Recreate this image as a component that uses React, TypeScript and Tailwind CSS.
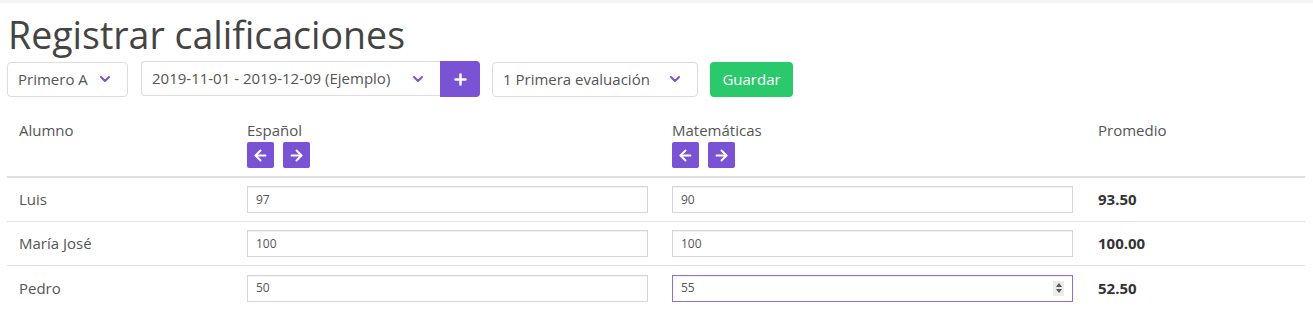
import { ArrowLeft, ArrowRight, ChevronDown, Plus } from "lucide-react"

type Row = {
    name: string
    espanol: string
    matematicas: string
    promedio: string
    focused?: boolean
}

const rows: Row[] = [
    { name: "Luis", espanol: "97", matematicas: "90", promedio: "93.50" },
    { name: "María José", espanol: "100", matematicas: "100", promedio: "100.00" },
    { name: "Pedro", espanol: "50", matematicas: "55", promedio: "52.50", focused: true },
]

function SelectBox({ label, width, roundedRight = true }: { label: string; width: string; roundedRight?: boolean }) {
    return (
        <div
            className={`flex h-[35px] items-center justify-between border border-[#dcdcdc] bg-white pl-[10px] pr-[14px] text-[15px] text-[#555] ${width} ${
                roundedRight ? "rounded-[4px]" : "rounded-l-[4px] border-r-0"
            }`}
        >
            <span>{label}</span>
            <ChevronDown className="h-[16px] w-[16px] text-[#7a52d4]" strokeWidth={3} />
        </div>
    )
}

function ArrowButtons() {
    return (
        <div className="mt-[1px] flex gap-[9px]">
            <button className="flex h-[26px] w-[27px] items-center justify-center rounded-[2px] bg-[#7a52d4] text-white">
                <ArrowLeft className="h-[17px] w-[17px]" strokeWidth={2.75} />
            </button>
            <button className="flex h-[26px] w-[27px] items-center justify-center rounded-[2px] bg-[#7a52d4] text-white">
                <ArrowRight className="h-[17px] w-[17px]" strokeWidth={2.75} />
            </button>
        </div>
    )
}

function GradeInput({ value, focused }: { value: string; focused?: boolean }) {
    return (
        <div
            className={`relative flex h-[27px] w-[401px] items-center border bg-white pl-[8px] text-[12px] text-[#555] shadow-[inset_0_1px_1px_rgba(0,0,0,0.06)] ${
                focused ? "border-[#8c6fd8]" : "border-[#d6d6d6]"
            }`}
        >
            <span>{value}</span>
            {focused && (
                <div className="absolute right-[8px] top-[5px] flex h-[15px] w-[11px] flex-col items-center justify-center gap-[2px] bg-[#ececec]">
                    <div className="h-0 w-0 border-x-[3px] border-b-[4px] border-x-transparent border-b-[#555]" />
                    <div className="h-0 w-0 border-x-[3px] border-t-[4px] border-x-transparent border-t-[#555]" />
                </div>
            )}
        </div>
    )
}

export default function App() {
    return (
        <div className="min-h-[316px] bg-white font-['Open_Sans',sans-serif] text-[#555]">
            <div className="h-[3px] bg-[#f4f4f4]" />
            <div className="px-[7px]">
                {/* Title */}
                <h1 className="mt-[7px] mb-[1px] h-[50px] pl-[1px] text-[37.5px] leading-[50px] text-[#444]">
                    Registrar calificaciones
                </h1>

                {/* Controls */}
                <div className="flex items-center">
                    <SelectBox label="Primero A" width="w-[121px]" />
                    <div className="ml-[13px] flex">
                        <SelectBox label="2019-11-01 - 2019-12-09 (Ejemplo)" width="w-[299px]" roundedRight={false} />
                        <button className="flex h-[36px] w-[40px] items-center justify-center rounded-r-[4px] bg-[#7a52d4] text-white">
                            <Plus className="h-[17px] w-[17px]" strokeWidth={3.5} />
                        </button>
                    </div>
                    <div className="ml-[12px]">
                        <SelectBox label="1 Primera evaluación" width="w-[206px]" />
                    </div>
                    <button className="ml-[12px] h-[35px] w-[83px] rounded-[4px] bg-[#2ac96c] text-[15px] text-white">
                        Guardar
                    </button>
                </div>

                {/* Table */}
                <div className="mt-[12px] w-[1298px]">
                    <div className="flex h-[69px] border-b-2 border-[#dedede] pt-[10px] text-[15px]">
                        <div className="w-[228px] px-[12px]">Alumno</div>
                        <div className="w-[425px] px-[12px]">
                            <div className="leading-[22px]">Español</div>
                            <ArrowButtons />
                        </div>
                        <div className="w-[426px] px-[12px]">
                            <div className="leading-[22px]">Matemáticas</div>
                            <ArrowButtons />
                        </div>
                        <div className="flex-1 px-[12px]">Promedio</div>
                    </div>
                    {rows.map((row, i) => (
                        <div
                            key={row.name}
                            className={`flex h-[44px] items-center text-[15px] ${i < rows.length - 1 ? "border-b border-[#e2e2e2]" : ""}`}
                        >
                            <div className="w-[228px] px-[12px]">{row.name}</div>
                            <div className="w-[425px] px-[12px]">
                                <GradeInput value={row.espanol} />
                            </div>
                            <div className="w-[426px] px-[12px]">
                                <GradeInput value={row.matematicas} focused={row.focused} />
                            </div>
                            <div className="flex-1 px-[12px] font-bold text-[#333]">{row.promedio}</div>
                        </div>
                    ))}
                </div>
            </div>
        </div>
    )
}
